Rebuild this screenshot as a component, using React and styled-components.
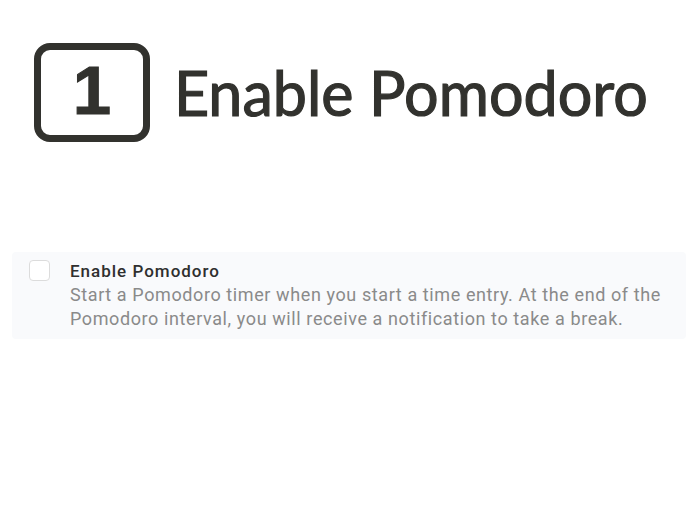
import React from "react";
import styled, { createGlobalStyle } from "styled-components";

const GlobalStyle = createGlobalStyle`
  html, body {
    margin: 0;
    padding: 0;
    background: #ffffff;
  }
  body {
    width: 700px;
    height: 526px;
    overflow: hidden;
  }
`;

const Page = styled.div`
  display: flex;
  flex-direction: column;
  padding: 43px 14px 0 12px;
`;

const Heading = styled.div`
  display: flex;
  align-items: center;
  gap: 24px;
  padding-left: 22px;
`;

const StepBox = styled.div`
  width: 116px;
  height: 99px;
  box-sizing: border-box;
  border: 7px solid #32322e;
  border-radius: 16px;
  display: flex;
  align-items: center;
  justify-content: center;
  padding-bottom: 4px;
  font-family: "Liberation Sans", Arial, sans-serif;
  font-weight: 700;
  font-size: 69px;
  line-height: 1;
  color: #32322e;
  -webkit-text-stroke: 1px #32322e;
`;

const Title = styled.h1`
  margin: 0;
  font-family: Lato, "Noto Sans", sans-serif;
  font-weight: 400;
  font-size: 61px;
  color: #32322e;
  -webkit-text-stroke: 1.2px #32322e;
`;

const Card = styled.div`
  margin-top: 110px;
  display: flex;
  align-items: flex-start;
  gap: 20px;
  padding: 8px 17px 8px 17px;
  background: #f9fafc;
  border-radius: 4px;
`;

const Checkbox = styled.div`
  flex: none;
  width: 21px;
  height: 21px;
  box-sizing: border-box;
  border: 1px solid #dcdcdc;
  border-radius: 4px;
  background: #ffffff;
`;

const Body = styled.div`
  display: flex;
  flex-direction: column;
  gap: 1px;
  font-family: Roboto, "Liberation Sans", sans-serif;
`;

const Label = styled.div`
  font-size: 17px;
  font-weight: 500;
  line-height: 22px;
  letter-spacing: 1px;
  color: #2f2f2f;
`;

const Description = styled.div`
  font-size: 18px;
  line-height: 24px;
  letter-spacing: 0.6px;
  color: #8a8a8a;
`;

export default function App() {
  return (
    <>
      <GlobalStyle />
      <Page>
        <Heading>
          <StepBox>1</StepBox>
          <Title>Enable Pomodoro</Title>
        </Heading>
        <Card>
          <Checkbox />
          <Body>
            <Label>Enable Pomodoro</Label>
            <Description>
              Start a Pomodoro timer when you start a time entry. At the end of the Pomodoro interval, you will receive a notification to take a break.
            </Description>
          </Body>
        </Card>
      </Page>
    </>
  );
}
